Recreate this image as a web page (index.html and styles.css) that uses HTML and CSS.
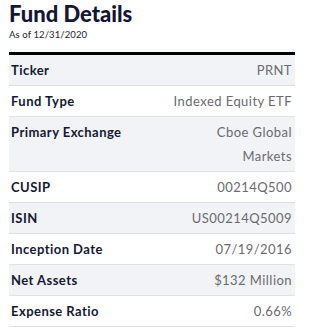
FILE: index.html
```html
<!DOCTYPE html>
<html>
<head>
<meta charset="utf-8">
<link rel="stylesheet" href="styles.css">
</head>
<body>
<div class="fund">
  <h1 class="title">Fund Details</h1>
  <div class="asof">As of 12/31/2020</div>
  <div class="table">
    <div class="row alt"><div class="label">Ticker</div><div class="value">PRNT</div></div>
    <div class="row"><div class="label">Fund Type</div><div class="value">Indexed Equity ETF</div></div>
    <div class="row alt"><div class="label">Primary Exchange</div><div class="value">Cboe Global<br>Markets</div></div>
    <div class="row"><div class="label">CUSIP</div><div class="value">00214Q500</div></div>
    <div class="row alt"><div class="label">ISIN</div><div class="value">US00214Q5009</div></div>
    <div class="row"><div class="label">Inception Date</div><div class="value">07/19/2016</div></div>
    <div class="row alt"><div class="label">Net Assets</div><div class="value">$132 Million</div></div>
    <div class="row"><div class="label">Expense Ratio</div><div class="value">0.66%</div></div>
  </div>
</div>
</body>
</html>
```
FILE: styles.css
```css
html, body { margin: 0; padding: 0; background: #fff; }
body { font-family: Lato, "Open Sans", sans-serif; color: #1b1d36; }
.fund { padding: 0 15px 0 9px; }
.title { margin: 0; padding-top: 1px; font-size: 22px; line-height: 26px; font-weight: 900; color: #141733; }
.asof { font-size: 9.5px; line-height: 12px; margin-top: 2px; color: #1b1d36; letter-spacing: 0.1px; }
.table { margin-top: 11px; border-top: 3px solid #000; }
.row { display: flex; justify-content: space-between; align-items: flex-start; padding: 3px 3px 3px 2px; border-bottom: 1px solid #dfe0e3; font-size: 13px; line-height: 24px; letter-spacing: 0.45px; }
.row.alt { background: #f2f3f6; }
.label { font-weight: 700; color: #151833; }
.value { color: #6a6a72; text-align: right; }
```
